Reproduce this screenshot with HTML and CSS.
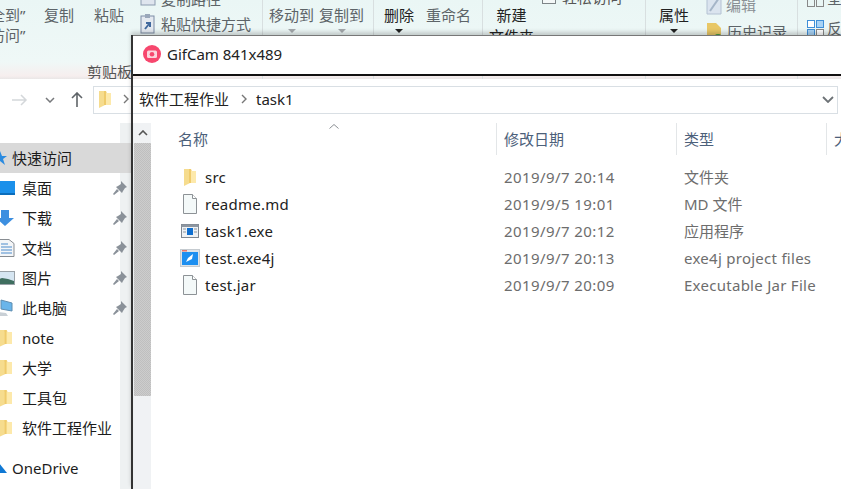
FILE: index.html
```html
<!DOCTYPE html>
<html>
<head>
	<meta charset="utf-8">
	<title>GifCam 841x489</title>
	<link rel="stylesheet" href="styles.css">
</head>
<body>
	<svg class="defs" width="0" height="0">
		<symbol id="folder" viewBox="0 0 12 18" preserveAspectRatio="none">
			<path d="M0 1h7l1 2h4v12H6l-6 3z" fill="#f6dc8e"/>
			<path d="M5 3h7v12H5z" fill="#fde9ab"/>
			<path d="M5 1h2v14H5z" fill="#efcb6c"/>
		</symbol>
		<symbol id="file" viewBox="0 0 16 20">
			<path d="M1.500 .5h9l4 4v15h-13z" fill="#f4f9f9" stroke="#8d9296"/>
			<path d="M10.500 .5v4h4" fill="#fff" stroke="#8d9296"/>
		</symbol>
		<symbol id="pin" viewBox="0 0 14 14">
			<path d="M8 0l6 6-2 1-2 3-1 2-6-6 2-1 3-2zM4 8l2 2-5 4-1-1z" fill="#8a9199"/>
		</symbol>
	</svg>

	<div class="ribbon">
		<div class="group clip">
			<div class="clip-main">
				<div class="big wide">
					<span>全到”</span>
					<span>访问”</span>
				</div>
				<div class="big copy"><span>复制</span></div>
				<div class="big paste"><span>粘贴</span></div>
				<div class="stack">
					<div class="small">
						<svg width="16" height="14" viewBox="0 0 16 14"><rect x="1" y="1" width="14" height="12" fill="#dfe5ee" stroke="#8c9bb0"/></svg>
						复制路径
					</div>
					<div class="small">
						<svg width="16" height="22" viewBox="0 0 16 22"><rect x="1" y="3" width="13" height="17" fill="#e4e9f0" stroke="#7d8ca5"/><rect x="5" y="1" width="5" height="4" fill="#9aa7ba"/><path d="M5 16l4-5M6 10h4v4" fill="none" stroke="#41699e" stroke-width="2"/></svg>
						粘贴快捷方式
					</div>
				</div>
			</div>
			<div class="group-label">剪贴板</div>
		</div>

		<div class="group move">
			<div class="big"><span>移动到</span><i class="caret pale"></i></div>
			<div class="big"><span>复制到</span><i class="caret pale"></i></div>
		</div>

		<div class="group edit">
			<div class="big strong"><span>删除</span><i class="caret"></i></div>
			<div class="big"><span>重命名</span></div>
		</div>

		<div class="group create">
			<div class="big strong"><span>新建</span><span class="second">文件夹</span></div>
			<div class="small easy">
				<svg width="15" height="15" viewBox="0 0 15 15"><rect x=".5" y=".5" width="13" height="13" fill="#f4f8f8" stroke="#7e8588"/></svg>
				轻松访问
			</div>
		</div>

		<div class="group open">
			<div class="big strong"><span>属性</span><i class="caret"></i></div>
			<div class="stack">
				<div class="small dim">
					<svg width="16" height="22" viewBox="0 0 16 22"><path d="M1 4h14v16H1z" fill="#dbe4ef" stroke="#b4c2d3"/><path d="M4 17L13 4" stroke="#a5b5c8" stroke-width="2"/></svg>
					编辑
				</div>
				<div class="small">
					<svg width="17" height="20" viewBox="0 0 17 20"><path d="M1 1h9l5 5v14H1z" fill="#e8c766"/><circle cx="12" cy="17" r="5" fill="#3f9b3f"/></svg>
					历史记录
				</div>
			</div>
		</div>

		<div class="group select">
			<div class="small">
				<svg width="17" height="17" viewBox="0 0 17 17"><rect x=".5" y=".5" width="7" height="7" fill="none" stroke="#888"/><rect x="9.500" y=".5" width="7" height="7" fill="none" stroke="#888"/><rect x=".5" y="9.500" width="7" height="7" fill="none" stroke="#888"/><rect x="9.500" y="9.500" width="7" height="7" fill="none" stroke="#888"/></svg>
				全
			</div>
			<div class="small">
				<svg width="17" height="17" viewBox="0 0 17 17"><rect x=".5" y=".5" width="7" height="7" fill="#fff" stroke="#3f8fd8"/><rect x="9.500" y=".5" width="7" height="7" fill="#a9d3f5" stroke="#3f8fd8"/><rect x=".5" y="9.500" width="7" height="7" fill="#a9d3f5" stroke="#3f8fd8"/><rect x="9.500" y="9.500" width="7" height="7" fill="#fff" stroke="#888"/></svg>
				反
			</div>
		</div>
	</div>

	<div class="nav">
		<svg class="nav-icon forward" width="16" height="12" viewBox="0 0 16 12"><path d="M0 6h14M9 1l5 5-5 5" fill="none" stroke="#d4d7da" stroke-width="1.500"/></svg>
		<svg class="nav-icon down" width="10" height="6" viewBox="0 0 10 6"><path d="M1 1l4 4 4-4" fill="none" stroke="#77797c" stroke-width="1.500"/></svg>
		<svg class="nav-icon up" width="12" height="15" viewBox="0 0 12 15"><path d="M6 15V1M1 6l5-5 5 5" fill="none" stroke="#5f6468" stroke-width="1.600"/></svg>
		<div class="address">
			<svg class="addr-folder" width="12" height="18"><use href="#folder"/></svg>
			<svg class="addr-sep first" width="6" height="10" viewBox="0 0 6 10"><path d="M1 1l4 4-4 4" fill="none" stroke="#777" stroke-width="1.400"/></svg>
			<span class="crumb">软件工程作业</span>
			<svg class="addr-sep" width="6" height="10" viewBox="0 0 6 10"><path d="M1 1l4 4-4 4" fill="none" stroke="#777" stroke-width="1.400"/></svg>
			<span class="crumb last">task1</span>
			<svg class="addr-drop" width="12" height="7" viewBox="0 0 12 7"><path d="M1 1l5 5 5-5" fill="none" stroke="#6d7276" stroke-width="1.800"/></svg>
		</div>
	</div>

	<div class="main">
		<div class="sidebar">
			<div class="side-row top selected">
				<svg width="14" height="14" viewBox="0 0 14 14"><path d="M7 0l2 5h5l-4 3 2 6-5-4-5 4 2-6-4-3h5z" fill="#2b8be0"/></svg>
				<span>快速访问</span>
			</div>
			<div class="side-row">
				<svg width="20" height="14" viewBox="0 0 20 14"><rect width="20" height="13" fill="#1b90ea"/><rect y="12" width="20" height="2" fill="#0b6dbb"/></svg>
				<span>桌面</span><svg class="pin"><use href="#pin"/></svg>
			</div>
			<div class="side-row">
				<svg width="20" height="16" viewBox="0 0 20 16"><path d="M6 0h8v8h5l-9 8-9-8h5z" fill="#3d8fe0"/></svg>
				<span>下载</span><svg class="pin"><use href="#pin"/></svg>
			</div>
			<div class="side-row">
				<svg width="20" height="18" viewBox="0 0 20 18"><path d="M4 .5h10l5 4v13H4z" fill="#f4f6f8" stroke="#888d92"/><path d="M6 5h7M6 8h11M6 11h11M6 14h11" stroke="#4d8ccc"/></svg>
				<span>文档</span><svg class="pin"><use href="#pin"/></svg>
			</div>
			<div class="side-row">
				<svg width="20" height="14" viewBox="0 0 20 14"><rect x=".5" y=".5" width="19" height="13" fill="#d6e6f2" stroke="#9aa2a8"/><path d="M1 9l6-2 6 1 6 2v3H1z" fill="#3f6e5f"/></svg>
				<span>图片</span><svg class="pin"><use href="#pin"/></svg>
			</div>
			<div class="side-row">
				<svg width="20" height="18" viewBox="0 0 20 18"><path d="M6 1l11 3v8L6 10z" fill="#69b5ea" stroke="#5f8db0"/><path d="M2 13l9 1 2 3H3z" fill="#c9d0d6"/></svg>
				<span>此电脑</span><svg class="pin"><use href="#pin"/></svg>
			</div>
			<div class="side-row"><svg class="side-folder"><use href="#folder"/></svg><span>note</span></div>
			<div class="side-row"><svg class="side-folder"><use href="#folder"/></svg><span>大学</span></div>
			<div class="side-row"><svg class="side-folder"><use href="#folder"/></svg><span>工具包</span></div>
			<div class="side-row"><svg class="side-folder"><use href="#folder"/></svg><span>软件工程作业</span></div>
			<div class="side-row top drive">
				<svg width="14" height="10" viewBox="0 0 14 10"><path d="M0 10l3-5 3-5 4 5 4 5z" fill="#0f78d4"/></svg>
				<span>OneDrive</span>
			</div>
		</div>

		<div class="scrollbar">
			<div class="scroll-up"><svg width="10" height="6" viewBox="0 0 10 6"><path d="M1 5l4-4 4 4" fill="none" stroke="#555" stroke-width="1.600"/></svg></div>
			<div class="scroll-thumb"></div>
		</div>

		<div class="files">
			<svg class="sort" width="10" height="5" viewBox="0 0 10 5"><path d="M.5 4.500L5 .5l4.500 4" fill="none" stroke="#8b8f93"/></svg>
			<div class="head">
				<div class="col-name">名称</div>
				<div class="col">修改日期</div>
				<div class="col">类型</div>
				<div class="col">大</div>
			</div>
			<div class="list">
				<div class="file">
					<div class="file-name"><svg class="icon" width="12" height="18"><use href="#folder"/></svg>src</div>
					<div class="date">2019/9/7 20:14</div><div>文件夹</div>
				</div>
				<div class="file">
					<div class="file-name"><svg class="icon" width="16" height="20"><use href="#file"/></svg>readme.md</div>
					<div class="date">2019/9/5 19:01</div><div>MD 文件</div>
				</div>
				<div class="file">
					<div class="file-name">
						<svg class="icon" width="18" height="14" viewBox="0 0 18 14"><rect x=".5" y=".5" width="17" height="13" fill="#eef1f4" stroke="#7f8790"/><rect x=".5" y=".5" width="17" height="2.500" fill="#8d96a0"/><rect x="6" y="4" width="6" height="7" fill="#0f6fd0"/><path d="M2 5h3M2 8h3M13 5h3M13 8h3" stroke="#8d96a0"/></svg>
						task1.exe
					</div>
					<div class="date">2019/9/7 20:12</div><div>应用程序</div>
				</div>
				<div class="file">
					<div class="file-name">
						<svg class="icon" width="20" height="18" viewBox="0 0 20 18"><rect x=".5" y=".5" width="19" height="17" fill="#dde3e8" stroke="#c5cbd0"/><rect x="2" y="3" width="16" height="13" fill="#1d8ff0"/><path d="M2 1h5v1.500H2z" fill="#e8776a"/><path d="M6 13l2-4 5-4-1 5-4 2z" fill="#fff"/></svg>
						test.exe4j
					</div>
					<div class="date">2019/9/7 20:13</div><div class="latin">exe4j project files</div>
				</div>
				<div class="file">
					<div class="file-name"><svg class="icon" width="16" height="20"><use href="#file"/></svg>test.jar</div>
					<div class="date">2019/9/7 20:09</div><div class="latin">Executable Jar File</div>
				</div>
			</div>
		</div>
	</div>

	<div class="gifcam">
		<div class="gif-title">
			<svg width="18" height="18" viewBox="0 0 18 18"><circle cx="9" cy="9" r="9" fill="#f7476e"/><rect x="4" y="5.500" width="10" height="7.500" rx="1.500" fill="#fbd5dd"/><circle cx="9" cy="9.200" r="2.300" fill="#f7476e"/></svg>
			GifCam 841x489
		</div>
	</div>
</body>
</html>
```

FILE: styles.css
```css
* {
	box-sizing: border-box;
}
html, body {
	margin: 0;
	height: 100%;
	overflow: hidden;
}
body {
	position: relative;
	width: 841px;
	height: 489px;
	background: #fff;
	color: #1c1c1c;
	font-family: "Noto Sans", "Noto Sans CJK SC", sans-serif;
	font-size: 15px;
	line-height: 20px;
}
.defs {
	display: block;
}
svg {
	display: block;
	flex: none;
}

/* ribbon, cut off at the top of the picture */
.ribbon {
	display: flex;
	height: 79px;
	overflow: hidden;
	background: linear-gradient(#eaf6f5 0, #eff8f7 62px, #f6eeee 76px, #e9e6e6 79px);
	color: #5d6468;
}
.group {
	flex: none;
	display: flex;
	height: 100%;
	border-right: 1px solid #d8dfe0;
}
.big {
	flex: none;
	display: flex;
	flex-direction: column;
	align-items: center;
	padding-top: 5px;
	white-space: nowrap;
}
.big.strong {
	color: #222;
}
.small {
	display: flex;
	align-items: center;
	gap: 5px;
	white-space: nowrap;
}
.caret {
	width: 0;
	height: 0;
	margin-top: 4px;
	border: 4px solid transparent;
	border-top-color: #222;
	border-bottom: 0;
}
.caret.pale {
	border-top-color: #a3a8ab;
}

.clip {
	position: relative;
	width: 263px;
	flex-direction: column;
}
.clip-main {
	display: flex;
}
.wide {
	align-items: flex-start;
	width: 44px;
	margin-left: -10px;
	margin-right: 10px;
}
.copy {
	width: 30px;
}
.paste {
	width: 30px;
	margin-left: 20px;
}
.stack {
	display: flex;
	flex-direction: column;
	gap: 1px;
}
.clip .stack {
	margin-left: 16px;
	margin-top: -13px;
}
.clip .small {
	height: 24px;
}
.group-label {
	margin-top: 17px;
	margin-left: 87px;
	color: #555;
}
.move {
	width: 111px;
	padding-left: 6px;
	gap: 5px;
}
.edit {
	width: 109px;
	padding-left: 10px;
	gap: 12px;
}
.create {
	width: 163px;
	padding-left: 6px;
	gap: 8px;
}
.second {
	margin-top: 1px;
}
.easy {
	align-self: flex-start;
	margin-top: -13px;
	color: #555;
}
.open {
	width: 152px;
	padding-left: 13px;
	gap: 17px;
}
.open .stack {
	margin-top: -6px;
	gap: 6px;
}
.open .small {
	gap: 4px;
}
.dim {
	color: #8a9095;
}
.select {
	flex-direction: column;
	padding-left: 9px;
	border-right: 0;
	margin-top: -12px;
	gap: 10px;
	height: auto;
}
.select .small {
	gap: 3px;
}

/* address row */
.nav {
	display: flex;
	align-items: center;
	height: 44px;
	padding: 0 3px 3px 12px;
}
.forward {
	margin-right: 17px;
}
.down {
	margin-right: 16px;
}
.up {
	margin-right: 10px;
}
.address {
	flex: 1;
	display: flex;
	align-items: center;
	height: 28px;
	padding: 0 3px 1px 5px;
	border: 1px solid #d9dfe4;
	color: #222;
}
.addr-folder {
	margin-right: 12px;
}
.addr-sep {
	margin-right: 9px;
}
.addr-sep.first {
	margin-right: 10px;
}
.crumb {
	margin-right: 12px;
}
.addr-drop {
	margin-left: auto;
}

.main {
	display: flex;
	height: 366px;
}

/* left tree, its icons run off the edge */
.sidebar {
	flex: none;
	width: 134px;
	padding-top: 20px;
	padding-right: 4px;
	background: linear-gradient(90deg, #fff 120px, #eef1f2 120px);
}
.side-row {
	display: flex;
	align-items: center;
	height: 30px;
	padding-left: 22px;
	position: relative;
}
.side-row > svg:first-child {
	position: absolute;
	left: -5px;
}
.side-row.top {
	padding-left: 12px;
}
.side-row.top > svg:first-child {
	left: -7px;
}
.selected {
	background: #d9d9d9;
	margin-right: -2px;
}
.side-folder {
	width: 13px;
	height: 18px;
}
.side-row > .side-folder:first-child {
	left: -1px;
}
.pin {
	width: 14px;
	height: 14px;
	margin-left: auto;
	margin-right: 3px;
}
.drive {
	margin-top: 10px;
}

.scrollbar {
	flex: none;
	width: 17px;
	background: #f0f2f4;
}
.scroll-up {
	display: flex;
	align-items: center;
	justify-content: center;
	height: 20px;
}
.scroll-thumb {
	height: 253px;
	background: repeating-conic-gradient(#bfbfbf 0 25%, #cdcdcd 0 50%) 0 0 / 2px 2px;
}

/* file list */
.files {
	flex: 1;
	position: relative;
	padding-left: 27px;
	min-width: 0;
}
.sort {
	position: absolute;
	left: 178px;
	top: 1px;
}
.head {
	display: grid;
	grid-template-columns: 318px 180px 150px 40px;
	height: 32px;
	color: #4c607a;
}
.head .col, .head .col-name {
	display: flex;
	align-items: center;
	height: 32px;
	white-space: nowrap;
}
.head .col {
	padding-left: 7px;
	border-left: 1px solid #e3e6e8;
}
.list {
	margin-top: 8px;
	color: #6d6d6d;
}
.file {
	display: grid;
	grid-template-columns: 326px 180px 150px;
	height: 27px;
	align-items: center;
	white-space: nowrap;
}
.file-name {
	display: flex;
	align-items: center;
	color: #222;
	position: relative;
	padding-left: 27px;
	letter-spacing: .25px;
}
.date {
	letter-spacing: .42px;
}
.latin {
	letter-spacing: .27px;
}
.icon {
	position: absolute;
	left: 12px;
	top: 50%;
	transform: translate(-50%, -50%);
}

/* recorder window lying over the explorer */
.gifcam {
	position: absolute;
	left: 131px;
	top: 35px;
	right: 0;
	bottom: 0;
	border-left: 2px solid #333;
	box-shadow: 0 -3px 4px rgba(0, 0, 0, .18);
	pointer-events: none;
}
.gif-title {
	display: flex;
	align-items: center;
	gap: 6px;
	height: 41px;
	padding-left: 10px;
	padding-bottom: 2px;
	background: #fff;
	border-top: 1px solid #777;
	border-bottom: 2px solid #111;
	color: #222;
	font-size: 15px;
}
```
